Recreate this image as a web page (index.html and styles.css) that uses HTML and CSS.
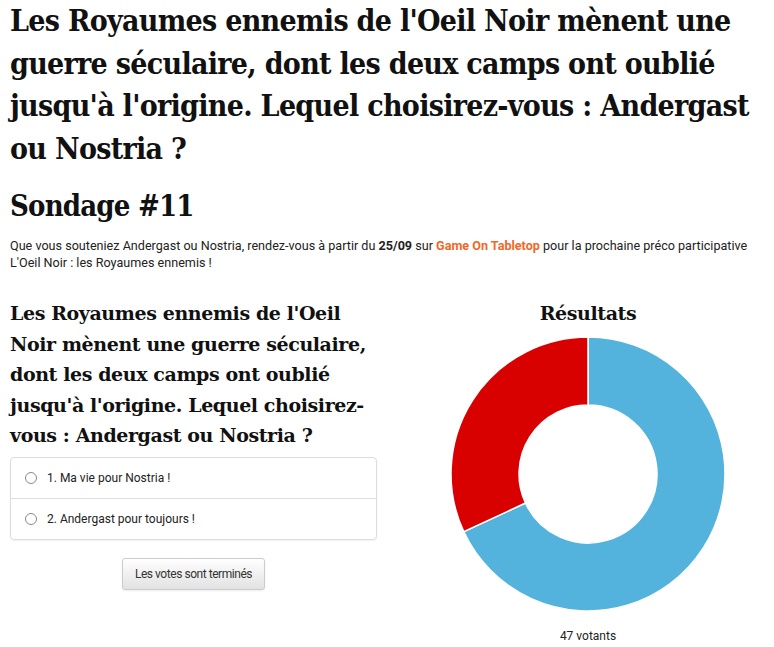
FILE: index.html
```html
<!DOCTYPE html>
<html lang="fr">
<head>
  <meta charset="UTF-8" />
  <meta name="viewport" content="width=device-width, initial-scale=1.0"/>
  <title>Sondage #11</title>
  <link rel="stylesheet" href="styles.css">
</head>
<body>

<h1 class="page-title">Les Royaumes ennemis de l'Oeil Noir mènent une guerre séculaire, dont les deux camps ont oublié jusqu'à l'origine. Lequel choisirez-vous : Andergast ou Nostria ?</h1>

<h2 class="poll-title">Sondage #11</h2>
<p class="intro">Que vous souteniez Andergast ou Nostria, rendez-vous à partir du <strong>25/09</strong> sur <a href="#">Game On Tabletop</a> pour la prochaine préco participative L'Oeil Noir : les Royaumes ennemis !</p>

<div class="poll">
  <div class="poll-form">
    <h3>Les Royaumes ennemis de l'Oeil Noir mènent une guerre séculaire, dont les deux camps ont oublié jusqu'à l'origine. Lequel choisirez-vous : Andergast ou Nostria ?</h3>
    <ul class="options">
      <li><label><input type="radio" name="vote" disabled> 1. Ma vie pour Nostria !</label></li>
      <li><label><input type="radio" name="vote" disabled> 2. Andergast pour toujours !</label></li>
    </ul>
    <div class="actions">
      <button class="btn" disabled>Les votes sont terminés</button>
    </div>
  </div>

  <div class="poll-results">
    <h3>Résultats</h3>
    <svg class="donut" width="280" height="280" viewBox="0 0 280 280">
      <path class="slice-blue" d="M140,3 A137,137 0 1 1 15.74,197.68 L77.42,169.05 A69,69 0 1 0 140,71 Z"/>
      <path class="slice-red" d="M15.74,197.68 A137,137 0 0 1 140,3 L140,71 A69,69 0 0 0 77.42,169.05 Z"/>
    </svg>
    <p class="voters">47 votants</p>
  </div>
</div>

</body>
</html>
```

FILE: styles.css
```css
body {
  font-family: 'Roboto', 'Liberation Sans', sans-serif;
  margin: 0;
  padding: 0 10px;
  background: #fff;
  color: #222;
}
h1, h2, h3 {
  font-family: 'DejaVu Serif', serif;
  font-weight: bold;
  color: #111;
}
.page-title {
  font-family: 'DejaVu Serif Condensed', 'DejaVu Serif', serif;
  font-size: 30px;
  line-height: 42.5px;
  margin: 0;
  letter-spacing: -0.7px;
}
.poll-title {
  font-family: 'DejaVu Serif Condensed', 'DejaVu Serif', serif;
  font-size: 29px;
  line-height: 40px;
  margin: 16px 0 11px;
  letter-spacing: -0.8px;
}
.intro {
  font-size: 12.6px;
  line-height: 17px;
  margin: 0 0 27px;
}
.intro a {
  color: #f0682a;
  font-weight: bold;
  text-decoration: none;
}

.poll {
  display: grid;
  grid-template-columns: 367px 1fr;
  gap: 35px;
}
.poll h3 {
  font-size: 19px;
  line-height: 30.5px;
  margin: 0 0 6px;
  letter-spacing: -0.4px;
}
.options {
  list-style: none;
  margin: 0;
  padding: 0;
  border: 1px solid #ddd;
  border-radius: 4px;
  box-shadow: 0 1px 2px rgba(0,0,0,0.06);
}
.options li {
  border-top: 1px solid #ddd;
  padding: 0 14px;
  height: 40px;
  display: flex;
  align-items: center;
  font-size: 12px;
  color: #222;
}
.options li:first-child {
  border-top: none;
}
.options label {
  display: flex;
  align-items: center;
  gap: 10px;
}
.options input {
  appearance: none;
  -webkit-appearance: none;
  margin: 0;
  width: 12px;
  height: 12px;
  border: 1px solid #8a8a8a;
  border-radius: 50%;
  background: #fff;
}
.actions {
  text-align: center;
  margin-top: 18px;
}
.btn {
  font-family: 'Roboto', sans-serif;
  font-size: 12px;
  letter-spacing: -0.45px;
  white-space: nowrap;
  color: #333;
  padding: 0;
  height: 32px;
  width: 143px;
  border: 1px solid #ccc;
  border-radius: 3px;
  background: linear-gradient(#fff, #e2e2e2);
  box-shadow: 0 1px 2px rgba(0,0,0,0.08);
}

.poll-results {
  text-align: center;
}
.poll-results h3 {
  margin: 0 0 5px;
}
.donut {
  display: block;
  margin: 0 auto;
}
.slice-blue {
  fill: #53b3dd;
  stroke: #fff;
  stroke-width: 1.5;
}
.slice-red {
  fill: #d90000;
  stroke: #fff;
  stroke-width: 1.5;
}
.voters {
  font-size: 12px;
  margin: 15px 0 0;
}
```
